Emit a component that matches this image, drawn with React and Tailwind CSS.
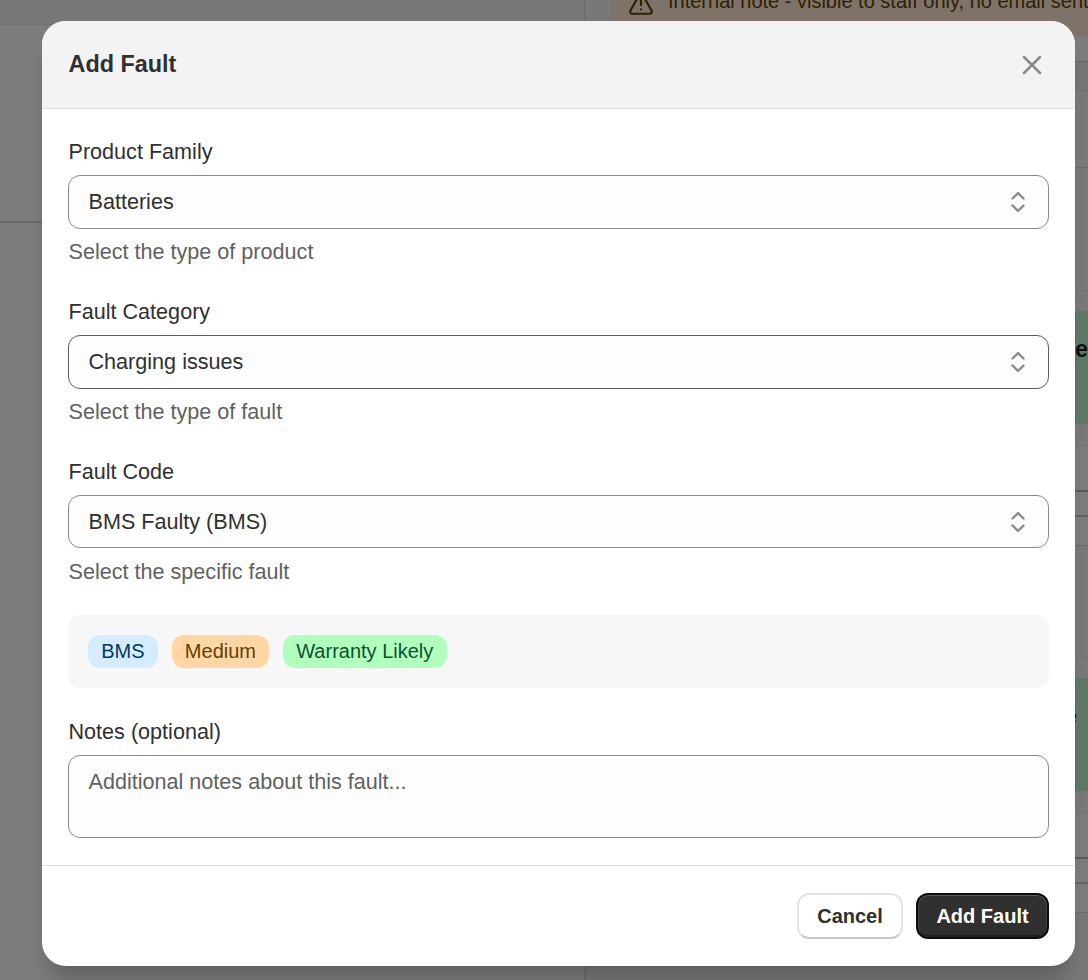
import React from 'react';
import { X, TriangleAlert } from 'lucide-react';

const fields = [
    { label: 'Product Family', value: 'Batteries', help: 'Select the type of product', border: 'border-[#8a8a8a]', height: 'h-[54px]', helpGap: 'mt-[11px]' },
    { label: 'Fault Category', value: 'Charging issues', help: 'Select the type of fault', border: 'border-[#5c5c5c]', height: 'h-[54px]', helpGap: 'mt-[11px]' },
    { label: 'Fault Code', value: 'BMS Faulty (BMS)', help: 'Select the specific fault', border: 'border-[#8a8a8a]', height: 'h-[53px] pt-[1px]', helpGap: 'mt-[12px]' },
];

// rows of the page behind the dialog, only their right ends show
const backRows = [
    { id: 1, className: 'h-[26px] border-b border-[#cfcfcf] bg-[#f8f8f8]' },
    { id: 2, className: 'h-[30px] border-b border-[#e3e3e3] bg-[#ececec]' },
    { id: 3, className: 'h-[76px] border-b border-[#d8d8d8] bg-[#f4f4f4]' },
    { id: 4, className: 'h-[123px] border-b border-[#e3e3e3] bg-[#f4f4f4]' },
    { id: 5, className: 'h-[20px] bg-[#f4f4f4]' },
    { id: 6, className: 'h-[113px] bg-[#c0f2cc] pt-[26px]', text: 'ne' },
    { id: 7, className: 'h-[22px] border-b border-[#e3e3e3] bg-[#f4f4f4]' },
    { id: 8, className: 'h-[46px] border-b-2 border-[#b5b5b5] bg-[#f8f8f8]' },
    { id: 9, className: 'h-[25px] border-b-2 border-[#c4c4c4] bg-[#f8f8f8]' },
    { id: 10, className: 'h-[29px] border-b border-[#d8d8d8] bg-[#f8f8f8]' },
    { id: 11, className: 'h-[112px] border-b border-[#e3e3e3] bg-[#f4f4f4]' },
    { id: 12, className: 'h-[20px] bg-[#f4f4f4]' },
    { id: 13, className: 'h-[113px] bg-[#c0f2cc] pt-[26px] pr-[11px]', text: 'e' },
    { id: 14, className: 'h-[22px] border-b border-[#e3e3e3] bg-[#f4f4f4]' },
    { id: 15, className: 'h-[46px] border-b-2 border-[#b5b5b5] bg-[#f8f8f8]' },
    { id: 16, className: 'h-[25px] border-b-2 border-[#c4c4c4] bg-[#f8f8f8]' },
    { id: 17, className: 'h-[29px] border-b border-[#d8d8d8] bg-[#f8f8f8]' },
];

function ChevronIcon() {
    return (
        <svg width="20" height="26" viewBox="0 0 20 26" fill="none" stroke="#8a8a8a" strokeWidth="2.4" strokeLinecap="round" strokeLinejoin="round">
            <path d="M4.500 9.500 10 4l5.500 5.500" />
            <path d="M4.500 16.500 10 22l5.500-5.500" />
        </svg>
    );
}

function SelectField({ label, value, help, border, height, helpGap }) {
    return (
        <div>
            <div className="mb-[11px] h-[24px] pl-[0.5px] text-[21.6px] leading-[24px] text-[#303030]">{label}</div>
            <div className={`flex items-center justify-between rounded-[12px] border bg-[#fdfdfd] pl-[19.5px] pr-[20px] text-[21.6px] text-[#303030] ${height} ${border}`}>
                <span>{value}</span>
                <ChevronIcon />
            </div>
            <div className={`pl-[0.5px] text-[21.6px] leading-[24px] text-[#616161] ${helpGap}`}>{help}</div>
        </div>
    );
}

function Badge({ className, children }) {
    return <span className={`inline-flex h-[33px] items-center rounded-[12px] px-[13.25px] pb-[1px] text-[20px] ${className}`}>{children}</span>;
}

export default function App() {
    return (
        <div className="relative h-[980px] w-[1088px] overflow-hidden bg-white font-['Liberation_Sans',sans-serif]">
            {/* page behind the dialog */}
            <div className="flex h-full">
                <div className="w-[586px] shrink-0 border-r-2 border-[#dcdcdc] bg-[#f8f8f8]">
                    <div className="h-[25px] border-b border-[#e3e3e3] bg-[#f1f1f1]" />
                    <div className="h-[198px] border-b-2 border-[#d4d4d4]" />
                </div>
                <div className="min-w-0 flex-1 bg-[#f1f1f1] pl-[25px]">
                    <div className="flex h-[36px] items-end gap-[14px] overflow-hidden bg-[#fce6d2] pb-[19px] pl-[17px] text-[20px] text-[#5e4200]">
                        <TriangleAlert size={26} strokeWidth={2} className="shrink-0" />
                        <span className="mb-[4px] whitespace-nowrap leading-[24px]">Internal note - visible to staff only, no email sent</span>
                    </div>
                    <div className="border-l-2 border-[#d4d4d4]">
                        {backRows.map((row) => (
                            <div key={row.id} className={`flex justify-end text-[23.4px] font-bold leading-[24px] text-[#202020] ${row.className}`}>
                                {row.text && <span>{row.text}</span>}
                            </div>
                        ))}
                    </div>
                </div>
            </div>

            <div className="absolute inset-0 bg-black/50" />

            <div className="absolute left-[42px] top-[21px] h-[945px] w-[1033px] rounded-[24px] bg-white shadow-[0_20px_20px_-8px_rgba(26,26,26,0.28)]">
                <div className="flex h-[88px] items-center justify-between rounded-t-[24px] border-b border-[#e3e3e3] bg-[#f3f3f3] pl-[26.5px] pr-[27px]">
                    <h2 className="text-[23.4px] font-bold text-[#303030]">Add Fault</h2>
                    <X size={32} color="#8a8a8a" strokeWidth={1.9} />
                </div>

                <div className="px-[26px] pt-[31px]">
                    <div className="mb-[31px] flex flex-col gap-[36px]">
                        {fields.map((f) => <SelectField key={f.label} {...f} />)}
                    </div>

                    <div className="flex h-[73px] items-center gap-[13.75px] rounded-[12px] bg-[#f7f7f7] px-[20px]">
                        <Badge className="bg-[#d5ebff] text-[#003a5a]">BMS</Badge>
                        <Badge className="bg-[#ffd6a4] text-[#5e4200]">Medium</Badge>
                        <Badge className="bg-[#b0ffbc] text-[#0c5132]">Warranty Likely</Badge>
                    </div>

                    <div className="mb-[11px] mt-[32px] pl-[0.5px] text-[21.6px] leading-[24px] text-[#303030]">Notes (optional)</div>
                    <div className="h-[83px] rounded-[12px] border border-[#8a8a8a] bg-[#fdfdfd] px-[19.5px] pt-[14px] text-[21.6px] leading-[24px] text-[#616161]">
                        Additional notes about this fault...
                    </div>
                </div>

                <div className="mt-[27px] flex items-start justify-end gap-[13px] border-t border-[#e3e3e3] pr-[26px] pt-[27px]">
                    <button className="h-[46px] w-[106px] rounded-[12px] border-2 border-[#e3e3e3] border-b-[#c9c9c9] bg-white text-[20px] font-bold text-[#303030]">Cancel</button>
                    <button className="h-[46px] w-[133px] rounded-[12px] border-2 border-[#0c0c0c] bg-[#303030] text-[20px] font-bold text-white shadow-[inset_0_1px_0_rgba(255,255,255,0.22),inset_1px_0_0_rgba(255,255,255,0.1),inset_-1px_0_0_rgba(255,255,255,0.1),inset_0_-2px_0_rgba(0,0,0,0.35)]">Add Fault</button>
                </div>
            </div>
        </div>
    );
}
